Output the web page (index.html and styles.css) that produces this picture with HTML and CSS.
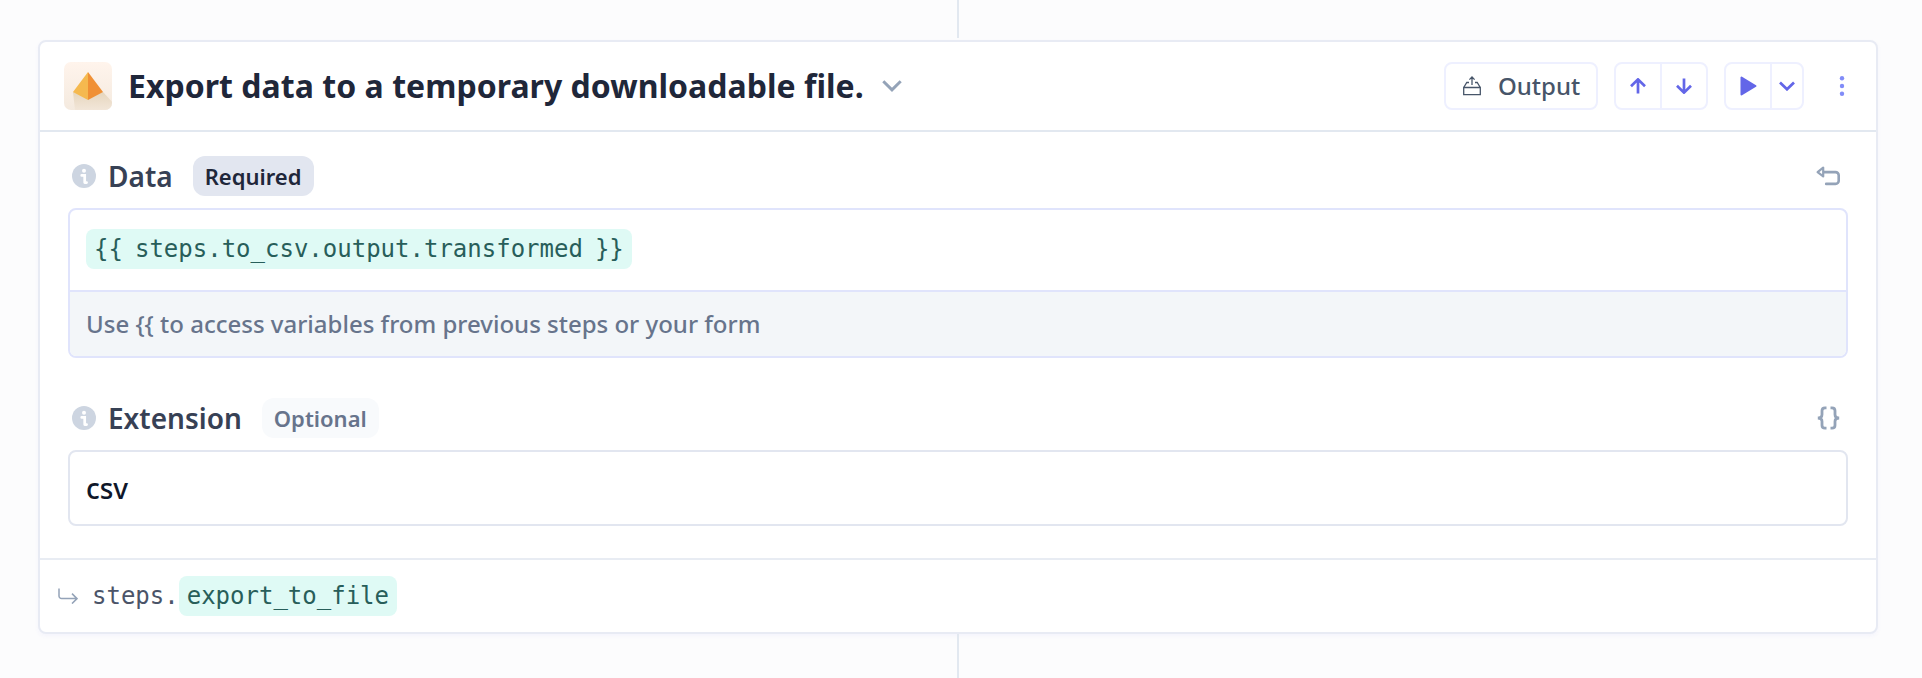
FILE: index.html
```html
<!DOCTYPE html>
<html lang="en">
<head>
<meta charset="utf-8">
<title>Workflow step</title>
<link rel="stylesheet" href="styles.css">
</head>
<body>
<div class="canvas">
  <div class="connector connector-top"></div>
  <section class="card">
    <header class="card-header">
      <svg class="logo" viewBox="0 0 48 48">
        <defs>
          <linearGradient id="tile" x1="0" y1="0" x2="0" y2="1"><stop offset="0" stop-color="#fff4ec"/><stop offset="1" stop-color="#f4eadf"/></linearGradient>
          <linearGradient id="shade" x1="0" y1="0" x2="0" y2="1"><stop offset="0" stop-color="#e6d6bd"/><stop offset="1" stop-color="#f2e6d9"/></linearGradient>
          <clipPath id="round"><rect width="48" height="48" rx="7"/></clipPath>
        </defs>
        <g clip-path="url(#round)">
          <rect width="48" height="48" fill="url(#tile)"/>
          <path d="M9 30 39 30 50 42V48H11Z" fill="url(#shade)"/>
          <path d="M24 10 9 30 24 38Z" fill="#f5b94f"/>
          <path d="M24 10 39 30 24 38Z" fill="#f09035"/>
        </g>
      </svg>
      <h1 class="title">Export data to a temporary downloadable file.</h1>
      <svg class="title-chevron" viewBox="0 0 20 12"><path d="M1.3 1.3 10 9.8 18.7 1.3" fill="none" stroke="currentColor" stroke-width="3"/></svg>
      <div class="actions">
        <button class="output-button">
          <svg class="output-icon" viewBox="0 0 18 20" fill="none" stroke="currentColor" stroke-width="1.3">
            <path d="M.7 11.5H17.3V18.6H.7ZM.7 11.5 3.8 6.5H6M17.3 11.5 14.2 6.5H12M9 9V1.5M6.4 3.6 9 1 11.6 3.6"/>
          </svg>
          <span class="output-text">Output</span>
        </button>
        <div class="button-group">
          <button class="group-button"><svg class="arrow" viewBox="0 0 16 16"><path d="M8 15.5V1.5M1 8.2 8 1.4 15 8.2"/></svg></button>
          <button class="group-button"><svg class="arrow" viewBox="0 0 16 16"><path d="M8 .5V14.5M1 7.8 8 14.6 15 7.8"/></svg></button>
        </div>
        <div class="button-group run-group">
          <button class="group-button"><svg class="play" viewBox="0 0 17 20"><path d="M1.5 1.5V18.5L15.5 10Z" fill="currentColor" stroke="currentColor" stroke-width="2" stroke-linejoin="round"/></svg></button>
          <button class="group-button run-more"><svg class="run-chevron" viewBox="0 0 16 10"><path d="M1 1.5 8 8.3 15 1.5"/></svg></button>
        </div>
        <svg class="dots" viewBox="0 0 6 20" fill="currentColor"><circle cx="3" cy="2.2" r="2.2"/><circle cx="3" cy="10" r="2.2"/><circle cx="3" cy="17.8" r="2.2"/></svg>
      </div>
    </header>
    <div class="card-body">
      <div class="field-head">
        <svg class="info" viewBox="0 0 24 24"><circle cx="12" cy="12" r="12" fill="#cdd5e1"/><circle cx="12" cy="6.8" r="2" fill="#fff"/><path d="M9.7 11.4H12.7V18.6M12.7 18.6H14.6" fill="none" stroke="#fff" stroke-width="2.7" stroke-linecap="round"/></svg>
        <h2 class="label">Data</h2>
        <span class="badge badge-required">Required</span>
        <svg class="field-action undo" viewBox="0 0 24 20" fill="none" stroke="currentColor" stroke-width="2.6"><path d="M7.2 1.6V10.4L1.6 6.1Z" stroke-linejoin="round" stroke-width="2.2"/><path d="M8 6.1H19.5A3.2 3.2 0 0 1 22.7 9.3V14.5A3.2 3.2 0 0 1 19.5 17.9H10.2" stroke-linecap="round"/></svg>
      </div>
      <div class="editor">
        <div class="editor-value"><code class="token">{{ steps.to_csv.output.transformed }}</code></div>
        <div class="editor-hint">Use {{ to access variables from previous steps or your form</div>
      </div>
      <div class="field-head field-extension">
        <svg class="info" viewBox="0 0 24 24"><circle cx="12" cy="12" r="12" fill="#cdd5e1"/><circle cx="12" cy="6.8" r="2" fill="#fff"/><path d="M9.7 11.4H12.7V18.6M12.7 18.6H14.6" fill="none" stroke="#fff" stroke-width="2.7" stroke-linecap="round"/></svg>
        <h2 class="label">Extension</h2>
        <span class="badge badge-optional">Optional</span>
        <svg class="field-action braces" viewBox="0 0 23 24" fill="none" stroke="currentColor" stroke-width="2.8"><path d="M9.5 1.8H8Q5 1.8 5 4.8V8.5Q5 12 .8 12Q5 12 5 15.5V19.2Q5 22.2 8 22.2H9.5M13.5 1.8H15Q18 1.8 18 4.8V8.5Q18 12 22.2 12Q18 12 18 15.5V19.2Q18 22.2 15 22.2H13.5"/></svg>
      </div>
      <div class="input">csv</div>
    </div>
    <footer class="card-footer">
      <svg class="return" viewBox="0 0 20 16" fill="none" stroke="currentColor" stroke-width="1.5"><path d="M1 .5V8A2.6 2.6 0 0 0 3.6 10.6H19M14 5.6 19 10.6 14 15.6"/></svg>
      <code class="prefix">steps.</code><code class="token">export_to_file</code>
    </footer>
  </section>
  <div class="connector connector-bottom"></div>
</div>
</body>
</html>
```
FILE: styles.css
```css
* { box-sizing: border-box; }
body { margin: 0; background: #fcfcfd; font-family: "Noto Sans", sans-serif; }
h1, h2 { margin: 0; }
svg { display: block; flex: none; }
button { margin: 0; padding: 0; border: 0; background: none; font: inherit; color: inherit; }
.canvas { height: 678px; display: flex; flex-direction: column; padding: 0 44px 0 38px; overflow: hidden; }
.connector { width: 2px; margin-left: 919px; background: #e2e8f0; flex: none; }
.connector-top { height: 38px; margin-bottom: 2px; }
.connector-bottom { height: 44px; }
.card { height: 594px; flex: none; background: #fff; border: 2px solid #e8ebf4; border-radius: 8px; box-shadow: 0 2px 4px rgba(99, 102, 241, .05); }
.card-header { height: 90px; display: flex; align-items: center; padding: 0 31px 0 24px; border-bottom: 2px solid #e2e8f0; }
.logo { width: 48px; height: 48px; }
.title { margin-left: 16px; font-size: 32px; line-height: 44px; font-weight: 700; letter-spacing: .03px; color: #1f273a; white-space: nowrap; }
.title-chevron { width: 20px; height: 12px; margin-left: 18px; color: #94a3b8; }
.actions { margin-left: auto; display: flex; align-items: center; color: #6366e8; }
.output-button { width: 154px; height: 48px; display: flex; align-items: center; padding-left: 17px; gap: 17px; border: 2px solid #eef0ff; border-radius: 8px; color: #475569; font-size: 24px; font-weight: 500; }
.output-text { padding-bottom: 2px; }
.output-icon { width: 18px; height: 20px; }
.button-group { width: 94px; height: 48px; margin-left: 16px; display: flex; border: 2px solid #eef0ff; border-radius: 8px; }
.group-button { flex: 1; display: flex; align-items: center; justify-content: center; }
.group-button + .group-button { border-left: 2px solid #eef0ff; }
.run-group { width: 80px; }
.run-more { flex: 0 0 32px; }
.arrow, .run-chevron { width: 16px; height: 16px; fill: none; stroke: currentColor; stroke-width: 2.7; }
.run-chevron { height: 10px; }
.play { width: 17px; height: 20px; }
.dots { width: 6px; height: 20px; margin-left: 35px; color: #818cf8; }
.card-body { height: 426px; padding: 24px 28px 0; }
.field-head { height: 40px; display: flex; align-items: center; padding: 0 8px 0 4px; }
.info { width: 24px; height: 24px; }
.label { margin-left: 12px; font-size: 28px; line-height: 38px; font-weight: 600; color: #374155; }
.badge { height: 40px; margin-left: 20px; padding: 0 12px; border-radius: 12px; font-size: 22px; line-height: 40px; font-weight: 600; }
.badge-required { padding-right: 13px; background: #e2e6f0; color: #1f273a; }
.badge-optional { background: #f8fafc; color: #67748c; }
.field-action { margin-left: auto; color: #94a3b8; }
.undo { width: 24px; height: 20px; }
.braces { width: 23px; height: 24px; }
.editor { height: 150px; margin-top: 12px; border: 2px solid #e0e4fc; border-radius: 8px; overflow: hidden; }
.editor-value { height: 80px; padding: 19px 16px 0; display: flex; }
.editor-hint { height: 66px; padding: 0 16px; border-top: 2px solid #e0e4fc; background: #f3f6f9; font-size: 24px; line-height: 64px; font-weight: 500; color: #67748c; }
.token { height: 40px; padding: 0 8px; border-radius: 8px; background: #dffaf5; color: #285e5a; font: 24px/40px "DejaVu Sans Mono", monospace; word-spacing: -2.4px; white-space: pre; }
.field-extension { margin-top: 40px; }
.input { height: 76px; margin-top: 12px; padding: 0 16px; border: 2px solid #e2e6f0; border-radius: 8px; font-size: 28px; line-height: 73px; font-weight: 500; color: #0f172a; }
.card-footer { height: 74px; display: flex; align-items: center; padding: 0 18px; border-top: 2px solid #e8ecf3; }
.return { width: 20px; height: 16px; color: #94a3b8; }
.prefix { margin-left: 14px; font: 24px/40px "DejaVu Sans Mono", monospace; color: #4b5468; }
```
